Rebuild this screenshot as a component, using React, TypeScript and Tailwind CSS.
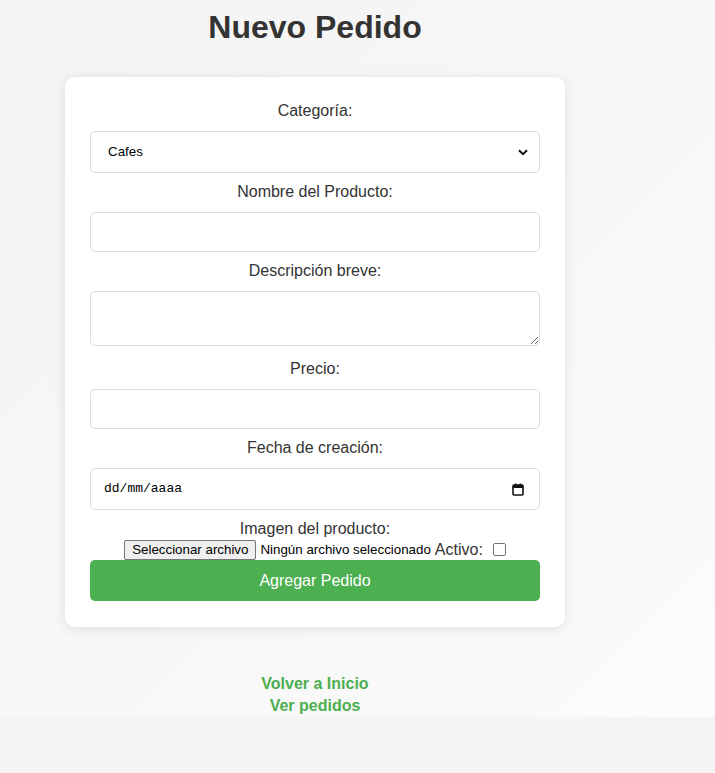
const labelCls = "block text-center text-[16px] leading-[18px] text-[#333] mt-[10px] mb-[11px]";
const inputCls = "block w-full border border-[#ddd] rounded-[5px] bg-white px-[10px] outline-none";

const CalendarIcon = () => (
    <svg width="12" height="13" viewBox="0 0 12 13" fill="none">
        <rect x="1" y="2" width="10" height="10" rx="1" stroke="#111" strokeWidth="1.6" />
        <rect x="1" y="2" width="10" height="3" fill="#111" />
        <rect x="3" y="0.5" width="1.5" height="2" fill="#111" />
        <rect x="7.5" y="0.5" width="1.5" height="2" fill="#111" />
    </svg>
);

const Chevron = () => (
    <svg width="10" height="7" viewBox="0 0 10 7" fill="none">
        <path d="M1 1.2 L5 5.2 L9 1.2" stroke="#111" strokeWidth="2" />
    </svg>
);

const PedidoForm = () => {
    return (
        <form className="w-[500px] bg-white rounded-[10px] shadow-[0_2px_12px_rgba(0,0,0,0.1)] px-[25px] pt-[15px] pb-[26px]">
            <label className={labelCls}>Categoría:</label>
            <div className="relative">
                <select className={inputCls + " appearance-none h-[42px] pl-[17px] text-[13.33px] text-black"} defaultValue="cafes">
                    <option value="cafes">Cafes</option>
                    <option value="postres">Postres</option>
                </select>
                <span className="absolute right-[12px] top-[18px] pointer-events-none"><Chevron /></span>
            </div>

            <label className={labelCls}>Nombre del Producto:</label>
            <input type="text" className={inputCls + " h-[40px] text-[16px]"} />

            <label className={labelCls}>Descripción breve:</label>
            <textarea className={inputCls + " h-[55px] py-[8px] text-[16px] mb-[14px]"} />

            <label className={labelCls}>Precio:</label>
            <input type="text" className={inputCls + " h-[40px] text-[16px]"} />

            <label className={labelCls}>Fecha de creación:</label>
            <div className={inputCls + " h-[42px] flex items-center justify-between pl-[13px] pr-[15px]"}>
                <span className="font-['Liberation_Mono',monospace] text-[13px] text-black">dd/mm/aaaa</span>
                <CalendarIcon />
            </div>

            <label className="block text-center text-[16px] leading-[18px] text-[#333] mt-[10px]">Imagen del producto:</label>
            <div className="text-center leading-[22px] h-[22px] text-[#333]">
                <span className="inline-block align-middle h-[20px] leading-[18px] px-[7px] border border-[#767676] rounded-[2px] bg-[#efefef] text-[13.33px] text-black">Seleccionar archivo</span>
                <span className="align-middle text-[13.33px] text-black ml-[4px]">Ningún archivo seleccionado</span>
                <span className="align-middle text-[16px] ml-[4px]">Activo:</span>
                <input type="checkbox" className="align-middle ml-[10px] w-[13px] h-[13px] appearance-none border border-[#767676] rounded-[2px] bg-white" />
            </div>

            <button type="submit" className="block w-full h-[41px] bg-[#4CAF50] rounded-[5px] text-white text-[16px]">
                Agregar Pedido
            </button>
        </form>
    );
};

const App = () => {
    return (
        <div className="min-h-screen bg-[#f4f4f4] font-['Liberation_Sans',Arial,sans-serif]">
            <div className="h-[717px] bg-gradient-to-br from-[#f3f3f3] to-[#fbfbfb]">
                <div className="w-[630px] flex flex-col items-center">
                    <h1 className="pt-[9px] text-[32px] font-bold text-[#333] leading-[37px] mb-[31px]">Nuevo Pedido</h1>
                    <PedidoForm />
                    <div className="mt-[46px] flex flex-col items-center text-[16px] font-bold leading-[22px] text-[#4CAF50]">
                        <a href="#">Volver a Inicio</a>
                        <a href="#">Ver pedidos</a>
                    </div>
                </div>
            </div>
        </div>
    );
};

export default App;
